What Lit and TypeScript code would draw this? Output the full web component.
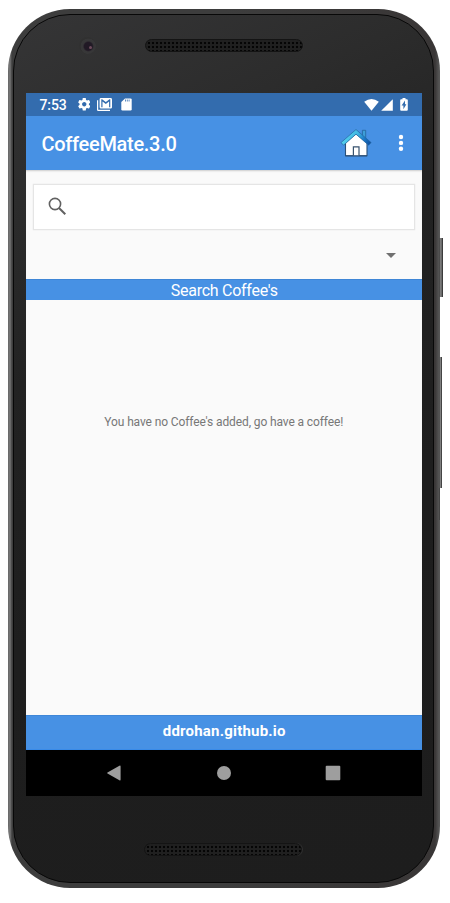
import { LitElement, html, css } from "lit";
import { customElement } from "lit/decorators.js";

@customElement("device-speaker")
class DeviceSpeaker extends LitElement {
  static styles = css`
    :host { display: block; width: 158px; height: 13px; }
    .grille {
      box-sizing: border-box; width: 100%; height: 100%; border-radius: 7px;
      background-color: #202020;
      background-image: radial-gradient(circle at 50% 50%, #050505 0 1px, transparent 1.6px);
      background-size: 4px 4px; background-position: 1px 1px;
      border: 1px solid #141414;
      box-shadow: 1px 0 0 #303030;
    }
  `;
  render() { return html`<div class="grille"></div>`; }
}

@customElement("status-bar")
class StatusBar extends LitElement {
  static styles = css`
    :host { display: flex; align-items: center; height: 23px; background: #336cae; color: #fff; padding: 0 13.5px; box-sizing: border-box; }
    .time { font: 500 14px/23px Roboto, sans-serif; width: 38px; white-space: nowrap; padding-top: 1px; letter-spacing: -0.1px; }
    svg { display: block; fill: #fff; flex: none; }
    .mail { margin-left: 7px; }
    .card { margin-left: 8.5px; }
    .wifi { margin-left: auto; }
    .signal { margin-left: 2px; }
    .battery { margin-left: 7px; }
  `;
  render() {
    return html`
      <span class="time">7:53</span>
      <svg class="gear" width="12.500" height="12.500" viewBox="2 2 20 20"><path d="M19.43 12.98c.04-.32.07-.64.07-.98s-.03-.66-.07-.98l2.11-1.65c.19-.15.24-.42.12-.64l-2-3.46c-.12-.22-.39-.3-.61-.22l-2.49 1c-.52-.4-1.08-.73-1.69-.98l-.38-2.65C14.46 2.18 14.25 2 14 2h-4c-.25 0-.46.18-.49.42l-.38 2.65c-.61.25-1.17.59-1.69.98l-2.49-1c-.23-.09-.49 0-.61.22l-2 3.460c-.13.22-.07.49.12.64l2.11 1.65c-.04.32-.07.65-.07.98s.03.66.07.98l-2.11 1.65c-.19.15-.24.42-.12.64l2 3.46c.12.22.39.3.61.22l2.49-1c.52.4 1.08.73 1.69.98l.38 2.65c.03.24.24.42.49.42h4c.25 0 .46-.18.49-.42l.38-2.65c.61-.25 1.17-.59 1.69-.98l2.49 1c.23.09.49 0 .61-.22l2-3.46c.12-.22.07-.49-.12-.64l-2.11-1.65zM12 15.5c-1.930 0-3.500-1.570-3.500-3.500s1.570-3.500 3.500-3.500 3.500 1.570 3.500 3.500-1.570 3.500-3.500 3.500z"/></svg>
      <svg class="mail" width="15" height="13" viewBox="0 0 15 13"><path d="M0 2.200h1.200v9.500H13V13H1.300Q0 13 0 11.700z"/><path fill-rule="evenodd" d="M4 0h9.600Q15 0 15 1.400v7.800q0 1.400-1.400 1.400H4q-1.400 0-1.400-1.400V1.400Q2.600 0 4 0zm.3 1.300v8h1.200V3.600l3.300 2.300 3.300-2.300v5.700h1.200v-8h-.8L8.800 4.100 5.100 1.300z"/></svg>
      <svg class="card" width="11" height="13" viewBox="0 0 11 13"><path d="M4 .4h5.500q1.200 0 1.200 1.200v9.700q0 1.200-1.200 1.200h-8q-1.200 0-1.200-1.200V4.100z"/><path d="M4.500 1.500v2M6.300 1.500v2M8.100 1.500v2" stroke="#336cae" stroke-width=".8"/></svg>
      <svg class="wifi" width="15" height="12" viewBox="0 0 15 12"><path d="M.2 2.700Q7.500-2.500 14.800 2.700L7.500 11.700z"/></svg>
      <svg class="signal" width="12" height="12" viewBox="0 0 12 12"><path d="M11.800.2v11.600H.2z"/></svg>
      <svg class="battery" width="8" height="13" viewBox="0 0 8 13"><path d="M2.500 0h3v1.200h1.300q1 0 1 1v9.600q0 1-1 1H1.200q-1 0-1-1V2.200q0-1 1-1h1.300z"/><path fill="#336cae" d="M5 2.600 1.600 7.600h1.800V11.200l3-4.900H5z"/></svg>
    `;
  }
}

@customElement("app-toolbar")
class AppToolbar extends LitElement {
  static styles = css`
    :host { display: flex; align-items: center; height: 54px; background: #4791e4; color: #fff; box-sizing: border-box; padding: 0 18px 0 15.500px; }
    .title { font: 500 20px/54px Roboto, sans-serif; white-space: nowrap; padding-top: 2px; letter-spacing: -0.3px; }
    .home { margin-left: auto; display: block; }
    .more { display: block; margin-left: 26px; }
  `;
  render() {
    return html`
      <span class="title">CoffeeMate.3.0</span>
      <svg class="home" width="32" height="30" viewBox="0 0 32 30">
        <defs>
          <linearGradient id="roof" gradientUnits="userSpaceOnUse" x1="4" x2="30" y1="4" y2="17"><stop offset="0" stop-color="#5ad6ee"/><stop offset=".45" stop-color="#3fb6e2"/><stop offset=".7" stop-color="#1f7fca"/><stop offset="1" stop-color="#0b4a9e"/></linearGradient>
        </defs>
        <path d="M22.400 2.300h3.300v9h-3.300z" fill="#3d9fd8" stroke="#24639a" stroke-width=".8"/>
        <path d="M5.500 14.500 16 5.500l11 9v13.200H5.500z" fill="#fff" stroke="#2a5078" stroke-width="1.100" stroke-linejoin="round"/>
        <path d="M16 1.500 1 14.600l2.600 2.600L16 6.200l12.600 11 2.500-2.600z" fill="url(#roof)" stroke="#2265a0" stroke-width=".7" stroke-linejoin="round"/>
        <path d="M13.400 27.500v-8.700h5.600v8.700" fill="#fff" stroke="#38536f" stroke-width="1.200"/>
        <path d="M5.500 27.900h21.500" stroke="#2a4b70" stroke-width="1"/>
      </svg>
      <svg class="more" width="6" height="18" viewBox="0 0 6 18" fill="#fff"><circle cx="3" cy="3" r="2.200"/><circle cx="3" cy="8.900" r="2.200"/><circle cx="3" cy="14.800" r="2.200"/></svg>
    `;
  }
}

@customElement("nav-bar")
class NavBar extends LitElement {
  static styles = css`
    :host { display: grid; grid-template-columns: repeat(3, 109.500px); justify-content: center; height: 46px; background: #000; align-items: center; justify-items: center; }
    svg { display: block; fill: #9e9e9e; }
  `;
  render() {
    return html`
      <svg width="16" height="16" viewBox="0 0 16 16"><path d="M13.400 .7Q14.600 0 14.600 1.400v13.200q0 1.400-1.200.7L1.500 8.500q-.8-.5 0-1z"/></svg>
      <svg width="16" height="16" viewBox="0 0 16 16"><circle cx="8" cy="8" r="7"/></svg>
      <svg width="16" height="16" viewBox="0 0 16 16"><rect x=".7" y=".7" width="14.600" height="14.600" rx="1"/></svg>
    `;
  }
}

@customElement("app-root")
class AppRoot extends LitElement {
  static styles = css`
    :host { display: block; width: 450px; height: 903px; background: #fff; overflow: hidden; font-family: Roboto, sans-serif; }
    .stage { padding: 9px 0 0 8px; }
    .phone {
      position: relative; box-sizing: border-box; width: 431.500px; height: 879px; padding: 5px 5.500px 5.500px 5px; border-radius: 62px;
      background: linear-gradient(90deg, #666 0, #777 2px, #3d3d3d 4px, #3d3d3d 50%, #393636 427px, #555 431px);
    }
    .power, .volume, .seam { position: absolute; width: 4px; background: linear-gradient(90deg, #333, #888 45%, #555 75%, #222); }
    .power { left: 431px; top: 229px; height: 59px; }
    .volume { left: 431px; top: 348px; height: 131px; width: 3px; }
    .seam { left: 431px; top: 479px; height: 32px; width: 1px; background: #444; }
    .face {
      box-sizing: border-box; height: 100%; border-radius: 57px; border: 1.500px solid #080808;
      background: linear-gradient(155deg, #353536 0, #2c2c2c 18%, #222 35%, #1e1e1e 60%, #1d1d1d 100%);
      padding: 0 11px 0 12px; display: flex; flex-direction: column;
    }
    .top { height: 78px; flex: none; display: flex; align-items: flex-start; box-sizing: border-box; padding: 20px 0 0 53px; }
    .camera { width: 17px; height: 17px; border-radius: 50%; margin-top: 1.500px; background: radial-gradient(circle at 55% 55%, #211925 0 4px, #373738 5.500px 7.500px, #303030 8px); display: grid; place-items: center; }
    .glint { width: 3px; height: 3px; border-radius: 50%; background: #6d4b5c; transform: translate(3px, 2px); }
    .top device-speaker { margin: 4px 0 0 49px; }
    .screen { width: 395.500px; height: 703px; flex: none; background: #fafafa; display: flex; flex-direction: column; }
    .content { flex: 1; display: flex; flex-direction: column; box-shadow: inset 0 2px 2px -1px #ccc; padding-top: 14px; }
    .search { box-sizing: border-box; height: 45.500px; margin: 0 7px; background: #fff; border: 1px solid #e5e5e5; box-shadow: 0 0 1px #ddd; padding: 12px 0 0 14px; }
    .search svg { display: block; fill: none; stroke: #616161; }
    .spinner { height: 49.500px; display: flex; align-items: center; justify-content: flex-end; padding: 2.500px 26px 0 0; box-sizing: border-box; }
    .band { height: 20.500px; background: #4791e4; color: #fff; text-align: center; font-size: 16px; letter-spacing: -0.27px; line-height: 22px; padding-left: 1px; border-top: 1px solid #3e86d6; box-sizing: border-box; }
    .empty { margin-top: 113px; text-align: center; color: #777; font-size: 12px; letter-spacing: -0.115px; line-height: 18px; }
    .footer { height: 35px; background: #4791e4; color: #fff; text-align: center; font-size: 15px; letter-spacing: 0.2px; font-weight: 700; line-height: 31px; padding-left: 1px; border-top: 1px solid #3f87d8; border-bottom: 1px solid #398be9; box-sizing: border-box; }
    .bottom { display: flex; padding: 47px 0 0 118px; }
  `;
  render() {
    return html`
      <div class="stage">
        <div class="phone">
          <div class="power"></div><div class="volume"></div><div class="seam"></div>
          <div class="face">
            <div class="top"><div class="camera"><div class="glint"></div></div><device-speaker></device-speaker></div>
            <div class="screen">
              <status-bar></status-bar>
              <app-toolbar></app-toolbar>
              <main class="content">
                <div class="search"><svg width="19" height="19" viewBox="0 0 19 19"><circle cx="7" cy="7" r="5.600" stroke-width="1.600"/><path d="m11 11 6.300 6.300" stroke-width="2"/></svg></div>
                <div class="spinner"><svg width="10" height="5" viewBox="0 0 10 5"><path d="M0 0h10L5 5z" fill="#707070"/></svg></div>
                <div class="band">Search Coffee's</div>
                <div class="empty">You have no Coffee's added, go have a coffee!</div>
              </main>
              <div class="footer">ddrohan.github.io</div>
              <nav-bar></nav-bar>
            </div>
            <div class="bottom"><device-speaker></device-speaker></div>
          </div>
        </div>
      </div>
    `;
  }
}
